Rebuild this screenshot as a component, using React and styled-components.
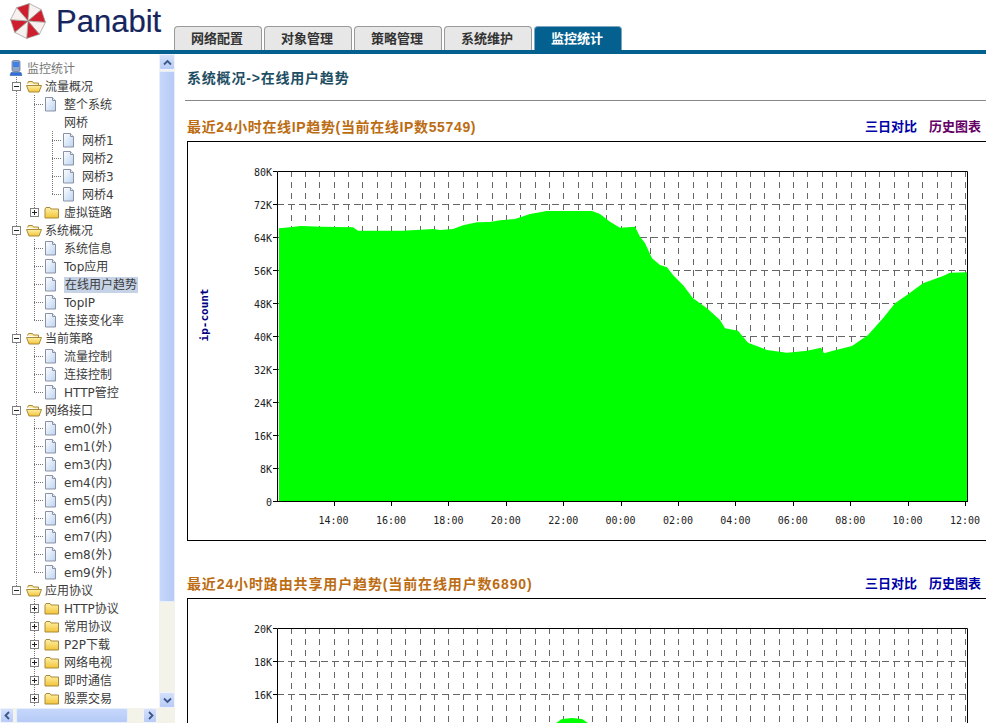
import React from 'react';
import styled, { createGlobalStyle } from 'styled-components';

const GlobalStyle = createGlobalStyle`
  html, body { margin: 0; padding: 0; height: 100%; overflow: hidden; background: #fff; }
  #root { height: 100%; }
`;

const CJK = `"Liberation Sans", "Noto Sans CJK SC", sans-serif`;
const TREE = `"DejaVu Sans", "Noto Sans CJK SC", sans-serif`;

const Page = styled.div`
  width: 986px;
  height: 723px;
  display: flex;
  flex-direction: column;
  overflow: hidden;
  font-family: ${CJK};
`;
const Header = styled.header`
  height: 50px;
  flex: none;
  display: flex;
  align-items: flex-end;
`;
const Brand = styled.div`
  width: 174px;
  height: 50px;
  flex: none;
  display: flex;
  align-items: flex-start;
  box-sizing: border-box;
  padding: 3px 0 0 10px;
  gap: 10px;
`;
const BrandName = styled.span`
  font: 400 31px/38px "Liberation Sans", sans-serif;
  color: #16255e;
  -webkit-text-stroke: 0.2px #16255e;
`;
const Tabs = styled.nav`
  display: flex;
  gap: 2px;
`;
const Tab = styled.div`
  width: 88px;
  height: 24px;
  box-sizing: border-box;
  display: flex;
  align-items: center;
  justify-content: center;
  border: 1px solid ${p => (p.$active ? '#7fa6c0' : '#9a9a9a')};
  border-bottom: none;
  border-radius: 4px 4px 0 0;
  background: ${p => (p.$active ? '#04608f' : '#e7e7e7')};
  color: ${p => (p.$active ? '#fff' : '#333')};
  font-size: 13px;
  font-weight: 700;
  padding: 0 2px 2px 0;
`;
const BlueBar = styled.div`
  height: 4px;
  flex: none;
  background: #04608f;
`;
const Body = styled.div`
  flex: 1;
  min-height: 0;
  display: grid;
  grid-template-columns: 175px 1fr;
`;
const Side = styled.aside`
  display: grid;
  grid-template-columns: 159px 16px;
  grid-template-rows: 1fr 15px;
  min-height: 0;
  height: 669px;
`;
const Tree = styled.div`
  overflow: hidden;
  padding-top: 5px;
  box-sizing: border-box;
  font-family: ${TREE};
  font-size: 12px;
  color: #3c3c3c;
`;
const Row = styled.div`
  height: 18px;
  display: flex;
  align-items: center;
  padding-left: 7px;
  white-space: nowrap;
`;
const dots = 'repeating-linear-gradient(to bottom,#777 0 1px,transparent 1px 2px)';
const dotsH = 'repeating-linear-gradient(to right,#777 0 1px,transparent 1px 2px)';
const Cell = styled.span`
  width: 18px;
  height: 18px;
  flex: none;
  display: flex;
  align-items: center;
  justify-content: center;
  background-repeat: no-repeat;
  background-image: ${p => [
    p.$v ? dots : null,
    p.$h ? dotsH : null,
  ].filter(Boolean).join(',') || 'none'};
  background-position: ${p => [
    p.$v ? '9px 0' : null,
    p.$h ? '9px 9px' : null,
  ].filter(Boolean).join(',') || '0 0'};
  background-size: ${p => [
    p.$v ? (p.$v === 'half' ? '1px 10px' : '1px 18px') : null,
    p.$h ? '9px 1px' : null,
  ].filter(Boolean).join(',') || 'auto'};
`;
const Label = styled.span`
  margin: 1px 0 0 ${p => p.$gap}px;
  padding: 0 ${p => (p.$selected ? 1 : 0)}px;
  height: 16px;
  line-height: 17px;
  background: ${p => (p.$selected ? '#c6d3e6' : 'transparent')};
  color: ${p => (p.$root ? '#777' : 'inherit')};
`;
const VBar = styled.div`
  display: flex;
  flex-direction: column;
  background: #f4f3e9;
  height: 654px;
`;
const HBar = styled.div`
  display: flex;
  align-items: stretch;
  background: #f4f3e9;
`;
const Corner = styled.div`
  background: #f4f3e9;
`;
const ArrowBtn = styled.div`
  width: ${p => (p.$wide ? 14 : 16)}px;
  height: ${p => (p.$wide ? 15 : 16)}px;
  margin-left: ${p => p.$left || 0}px;
  flex: none;
  box-sizing: border-box;
  border: 1px solid #eef3fe;
  border-radius: 2px;
  background: linear-gradient(#d5e1fb, #b7cbf6);
  display: flex;
  align-items: center;
  justify-content: center;
`;
const VThumb = styled.div`
  height: 531px;
  flex: none;
  margin-top: 1px;
  box-sizing: border-box;
  border: 1px solid #e6eefc;
  border-radius: 2px;
  background: linear-gradient(to right, #c6d7fb, #b5caf6);
`;
const HThumb = styled.div`
  width: 112px;
  flex: none;
  margin-left: 2px;
  box-sizing: border-box;
  border: 1px solid #e6eefc;
  border-radius: 2px;
  background: linear-gradient(#c6d7fb, #b5caf6);
`;
const Spacer = styled.div`
  flex: 1;
`;
const Main = styled.main`
  padding-left: 10px;
  overflow: hidden;
  min-width: 0;
`;
const PageTitle = styled.h1`
  margin: 0;
  box-sizing: border-box;
  height: 47px;
  padding: 14px 0 0 2px;
  font-size: 14px;
  line-height: 20px;
  font-weight: 700;
  color: #1d4e63;
  border-bottom: 1px solid #888;
  letter-spacing: 0.8px;
`;
const Section = styled.section`
  margin-left: 2px;
  margin-bottom: 17px;
`;
const SectionHead = styled.div`
  height: 40px;
  box-sizing: border-box;
  padding: 18px 5px 0 0;
  display: flex;
  align-items: flex-start;
  justify-content: space-between;
`;
const SectionTitle = styled.h2`
  margin: 0;
  font-size: 14px;
  line-height: 16px;
  font-weight: 700;
  color: #bc6c12;
  letter-spacing: ${p => p.$spacing}px;
`;
const Links = styled.div`
  display: flex;
  gap: 12px;
`;
const ChartLink = styled.a`
  font-size: 13px;
  line-height: 16px;
  font-weight: 700;
  color: ${p => (p.$visited ? '#660066' : '#0000a8')};
`;
const ChartBox = styled.div`
  height: 400px;
  box-sizing: border-box;
  border: 1px solid #000;
  border-right: none;
  background: #fff;
`;
const ChartSvg = styled.svg`
  display: block;
`;

const LogoMark = () => {
  const cx = 18, cy = 18, r = 17.5;
  const wedges = [];
  for (let i = 0; i < 8; i++) {
    const a = ((-130.5 + i * 45) * Math.PI) / 180;
    const b = ((-130.5 + (i + 1) * 45) * Math.PI) / 180;
    wedges.push(
      <polygon
        key={i}
        points={`${cx},${cy} ${cx + r * Math.cos(a)},${cy + r * Math.sin(a)} ${cx + r * Math.cos(b)},${cy + r * Math.sin(b)}`}
        fill={i % 2 === 0 ? '#cf1f2e' : '#f7f1ef'}
        stroke="#9b9694"
        strokeWidth="0.7"
      />
    );
  }
  return <svg width="36" height="36" viewBox="0 0 36 36">{wedges}</svg>;
};

const RootIcon = () => (
  <svg width="16" height="17" viewBox="0 0 16 17">
    <rect x="4" y="0.5" width="8" height="11" rx="1.5" fill="#8fa6c8" stroke="#5d6f8e" strokeWidth="0.7" />
    <rect x="5" y="2" width="6" height="5" fill="#3f7fe8" />
    <path d="M3 12.5h10l1 3H2z" fill="#2f6fe0" stroke="#24508f" strokeWidth="0.5" />
  </svg>
);
const PageIcon = () => (
  <svg width="13" height="15" viewBox="0 0 13 15" style={{ marginLeft: -4 }}>
    <defs>
      <linearGradient id="pg" x1="0" y1="0" x2="1" y2="1">
        <stop offset="0" stopColor="#fff" />
        <stop offset="1" stopColor="#bcd3f2" />
      </linearGradient>
    </defs>
    <path d="M1.5 .5h7l3 3v10.5h-10z" fill="url(#pg)" stroke="#8a93a5" />
    <path d="M8.5 .5v3h3" fill="#e6eef9" stroke="#8a93a5" />
  </svg>
);
const FolderIcon = ({ open }) => (
  <svg width="16" height="13" viewBox="0 0 16 13">
    <defs>
      <linearGradient id="fd" x1="0" y1="0" x2="0" y2="1">
        <stop offset="0" stopColor="#fff0a8" />
        <stop offset="1" stopColor="#f2c437" />
      </linearGradient>
    </defs>
    {open ? (
      <>
        <path d="M1.5 3.5l1-2h4l1 1.500h5v2" fill="#fdeaa2" stroke="#a98a3a" />
        <path d="M.5 5.500h12.500l2.500 0-2.500 6.500h-10z" fill="url(#fd)" stroke="#a98a3a" strokeLinejoin="round" />
      </>
    ) : (
      <path d="M1 3l1-1.500h4l1 1.500h7.500v9h-13.500z" fill="url(#fd)" stroke="#a98a3a" strokeLinejoin="round" />
    )}
  </svg>
);
const Toggle = ({ open }) => (
  <svg width="9" height="9" viewBox="0 0 9 9">
    <rect x=".5" y=".5" width="8" height="8" fill="#fff" stroke="#808080" />
    <path d={open ? 'M2 4.500h5' : 'M2 4.500h5M4.500 2v5'} stroke="#222" shapeRendering="crispEdges" />
  </svg>
);
const Chev = ({ d }) => (
  <svg width="9" height="9" viewBox="0 0 9 9">
    <path d={d} fill="none" stroke="#3b5688" strokeWidth="1.800" />
  </svg>
);

const T = (label, guides, kind, extra = {}) => ({ label, guides, kind, ...extra });
const tree = [
  T('流量概况', [], 'open'),
  T('整个系统', [1], 'page'),
  T('网桥', [1, 1], 'none', { noElbow: true }),
  T('网桥1', [1, 1], 'page'),
  T('网桥2', [1, 1], 'page'),
  T('网桥3', [1, 1], 'page'),
  T('网桥4', [1, 1], 'page', { last: true }),
  T('虚拟链路', [1], 'closed', { last: true }),
  T('系统概况', [], 'open'),
  T('系统信息', [1], 'page'),
  T('Top应用', [1], 'page'),
  T('在线用户趋势', [1], 'page', { selected: true }),
  T('TopIP', [1], 'page'),
  T('连接变化率', [1], 'page', { last: true }),
  T('当前策略', [], 'open'),
  T('流量控制', [1], 'page'),
  T('连接控制', [1], 'page'),
  T('HTTP管控', [1], 'page', { last: true }),
  T('网络接口', [], 'open'),
  T('em0(外)', [1], 'page'),
  T('em1(外)', [1], 'page'),
  T('em3(内)', [1], 'page'),
  T('em4(内)', [1], 'page'),
  T('em5(内)', [1], 'page'),
  T('em6(内)', [1], 'page'),
  T('em7(内)', [1], 'page'),
  T('em8(外)', [1], 'page'),
  T('em9(外)', [1], 'page', { last: true }),
  T('应用协议', [], 'open', { last: true }),
  T('HTTP协议', [0], 'closed'),
  T('常用协议', [0], 'closed'),
  T('P2P下载', [0], 'closed'),
  T('网络电视', [0], 'closed'),
  T('即时通信', [0], 'closed'),
  T('股票交易', [0], 'closed'),
];

const TreeRow = ({ item }) => {
  const isFolder = item.kind === 'open' || item.kind === 'closed';
  const vert = item.last ? 'half' : 'full';
  const guides = item.noElbow ? item.guides.slice(0, 1) : item.guides;
  const labelGap = item.guides.length === 0 ? 2 : 3;
  return (
    <Row>
      {guides.map((g, i) => <Cell key={i} $v={g ? 'full' : undefined} />)}
      {item.noElbow ? (
        <Cell $v="full" />
      ) : isFolder ? (
        <Cell $v={vert}><Toggle open={item.kind === 'open'} /></Cell>
      ) : (
        <Cell $v={vert} $h />
      )}
      <Cell>
        {isFolder && <FolderIcon open={item.kind === 'open'} />}
        {item.kind === 'page' && <PageIcon />}
      </Cell>
      <Label $gap={labelGap} $selected={item.selected}>{item.label}</Label>
    </Row>
  );
};

const PX0 = 277, PX1 = 968, PY0 = 171, PY1 = 501;
const tickX = i => 333.6 + i * 57.4;
const gridX = [];
for (let k = -3; k <= 44; k++) {
  const x = Math.round(333.6 + k * 14.36);
  if (x > PX0 && x < PX1) gridX.push(x);
}
const times = ['14:00', '16:00', '18:00', '20:00', '22:00', '00:00', '02:00', '04:00', '06:00', '08:00', '10:00', '12:00'];

const curve1 = [
  [279, 228.3], [290, 227.3], [300, 226], [323, 226.7], [353, 227.3], [358, 230.7], [383, 230.7], [403, 230.7],
  [433, 229], [440, 230], [453, 229], [463, 225.3], [477, 222.3], [490, 222], [500, 220.3], [515, 219], [530, 214],
  [547, 211], [592, 211], [600, 214], [610, 221.7], [620, 227.7], [635, 226.7], [640, 236.7], [645, 243], [652, 258.3],
  [660, 265], [667, 267.3], [673, 275], [683, 285], [693, 298.3], [707, 308.3], [720, 320], [725, 328.3], [738, 330.7],
  [748, 342.7], [767, 350], [787, 352.7], [807, 350.7], [821, 347.7], [824, 353.3], [833, 350.7], [852, 346], [868, 335],
  [883, 318.3], [895, 303.3], [907, 295], [923, 283.3], [943, 276], [950, 272.7], [968, 272.3],
];
const curve2 = [
  [279, 300], [400, 300], [500, 285], [540, 272], [556, 266], [562, 262], [572, 261], [582, 262], [588, 266],
  [620, 275], [700, 290], [800, 295], [968, 300],
];

const monoFont = '"DejaVu Sans Mono", monospace';

const Chart = ({ labels, curve, full }) => {
  const area = `${PX0 + 2},${PY1} ${curve.map(p => p.join(',')).join(' ')} ${PX1},${PY1}`;
  const rows = [1, 2, 3, 4, 5, 6, 7, 8, 9];
  return (
    <ChartSvg width="798" height="398" viewBox="188 142 798 398">
      {rows.map(i => {
        const y = PY0 + 33 * i;
        return <line key={i} x1={PX0} x2={PX1} y1={y + 0.5} y2={y + 0.5} stroke="#666" strokeDasharray="7 4" />;
      })}
      {gridX.map(x => (
        <line key={x} x1={x + 0.5} x2={x + 0.5} y1={PY0} y2={PY1} stroke="#666" strokeDasharray="6 5" />
      ))}
      <polygon points={area} fill="#00ff00" />
      <path d={`M${PX0 + 0.5} ${PY1 + 0.5}V${PY0 + 0.5}H${PX1 - 0.5}V${PY1 + 0.5}`} fill="none" stroke="#000" />
      <line x1={PX0} x2={PX1} y1={PY1 + 0.5} y2={PY1 + 0.5} stroke="#000" />
      {rows.concat(0, 10).map(i => (
        <line key={i} x1={PX0 - 4} x2={PX0} y1={PY0 + 33 * i + 0.5} y2={PY0 + 33 * i + 0.5} stroke="#000" />
      ))}
      {labels.map((l, i) => (
        <text key={l} x={272} y={PY0 + 33 * i + 5} textAnchor="end" fontFamily={monoFont} fontSize="10" fill="#222">{l}</text>
      ))}
      {times.map((t, i) => (
        <line key={t} x1={Math.round(tickX(i)) + 0.5} x2={Math.round(tickX(i)) + 0.5} y1={PY1} y2={PY1 + 5} stroke="#000" />
      ))}
      {full && times.map((t, i) => (
        <text key={t} x={tickX(i)} y={524} textAnchor="middle" fontFamily={monoFont} fontSize="10" fill="#222">{t}</text>
      ))}
      {full && (
        <text
          transform="translate(208 315) rotate(-90)"
          textAnchor="middle"
          fontFamily={monoFont}
          fontSize="11"
          fontWeight="700"
          fill="#000080"
        >ip-count</text>
      )}
    </ChartSvg>
  );
};

const labels1 = ['80K', '72K', '64K', '56K', '48K', '40K', '32K', '24K', '16K', '8K', '0'];
const labels2 = ['20K', '18K', '16K'];

export default function App() {
  return (
    <Page>
      <GlobalStyle />
      <Header>
        <Brand>
          <LogoMark />
          <BrandName>Panabit</BrandName>
        </Brand>
        <Tabs>
          <Tab>网络配置</Tab>
          <Tab>对象管理</Tab>
          <Tab>策略管理</Tab>
          <Tab>系统维护</Tab>
          <Tab $active>监控统计</Tab>
        </Tabs>
      </Header>
      <BlueBar />
      <Body>
        <Side>
          <Tree>
            <Row>
              <Cell><RootIcon /></Cell>
              <Label $gap={2} $root>监控统计</Label>
            </Row>
            {tree.map((item, i) => <TreeRow key={i} item={item} />)}
          </Tree>
          <VBar>
            <ArrowBtn><Chev d="M1 6.500l3.500-3.500 3.500 3.500" /></ArrowBtn>
            <VThumb />
            <Spacer />
            <ArrowBtn><Chev d="M1 2.500l3.500 3.500 3.500-3.500" /></ArrowBtn>
          </VBar>
          <HBar>
            <ArrowBtn $wide><Chev d="M6 1l-3.500 3.500 3.500 3.500" /></ArrowBtn>
            <HThumb />
            <ArrowBtn $wide $left={15}><Chev d="M3 1l3.500 3.500-3.500 3.500" /></ArrowBtn>
          </HBar>
          <Corner />
        </Side>
        <Main>
          <PageTitle>系统概况-&gt;在线用户趋势</PageTitle>
          <Section>
            <SectionHead>
              <SectionTitle $spacing={0.65}>最近24小时在线IP趋势(当前在线IP数55749)</SectionTitle>
              <Links>
                <ChartLink>三日对比</ChartLink>
                <ChartLink $visited>历史图表</ChartLink>
              </Links>
            </SectionHead>
            <ChartBox><Chart labels={labels1} curve={curve1} full /></ChartBox>
          </Section>
          <Section>
            <SectionHead>
              <SectionTitle $spacing={0.87}>最近24小时路由共享用户趋势(当前在线用户数6890)</SectionTitle>
              <Links>
                <ChartLink>三日对比</ChartLink>
                <ChartLink>历史图表</ChartLink>
              </Links>
            </SectionHead>
            <ChartBox><Chart labels={labels2} curve={curve2} /></ChartBox>
          </Section>
        </Main>
      </Body>
    </Page>
  );
}
